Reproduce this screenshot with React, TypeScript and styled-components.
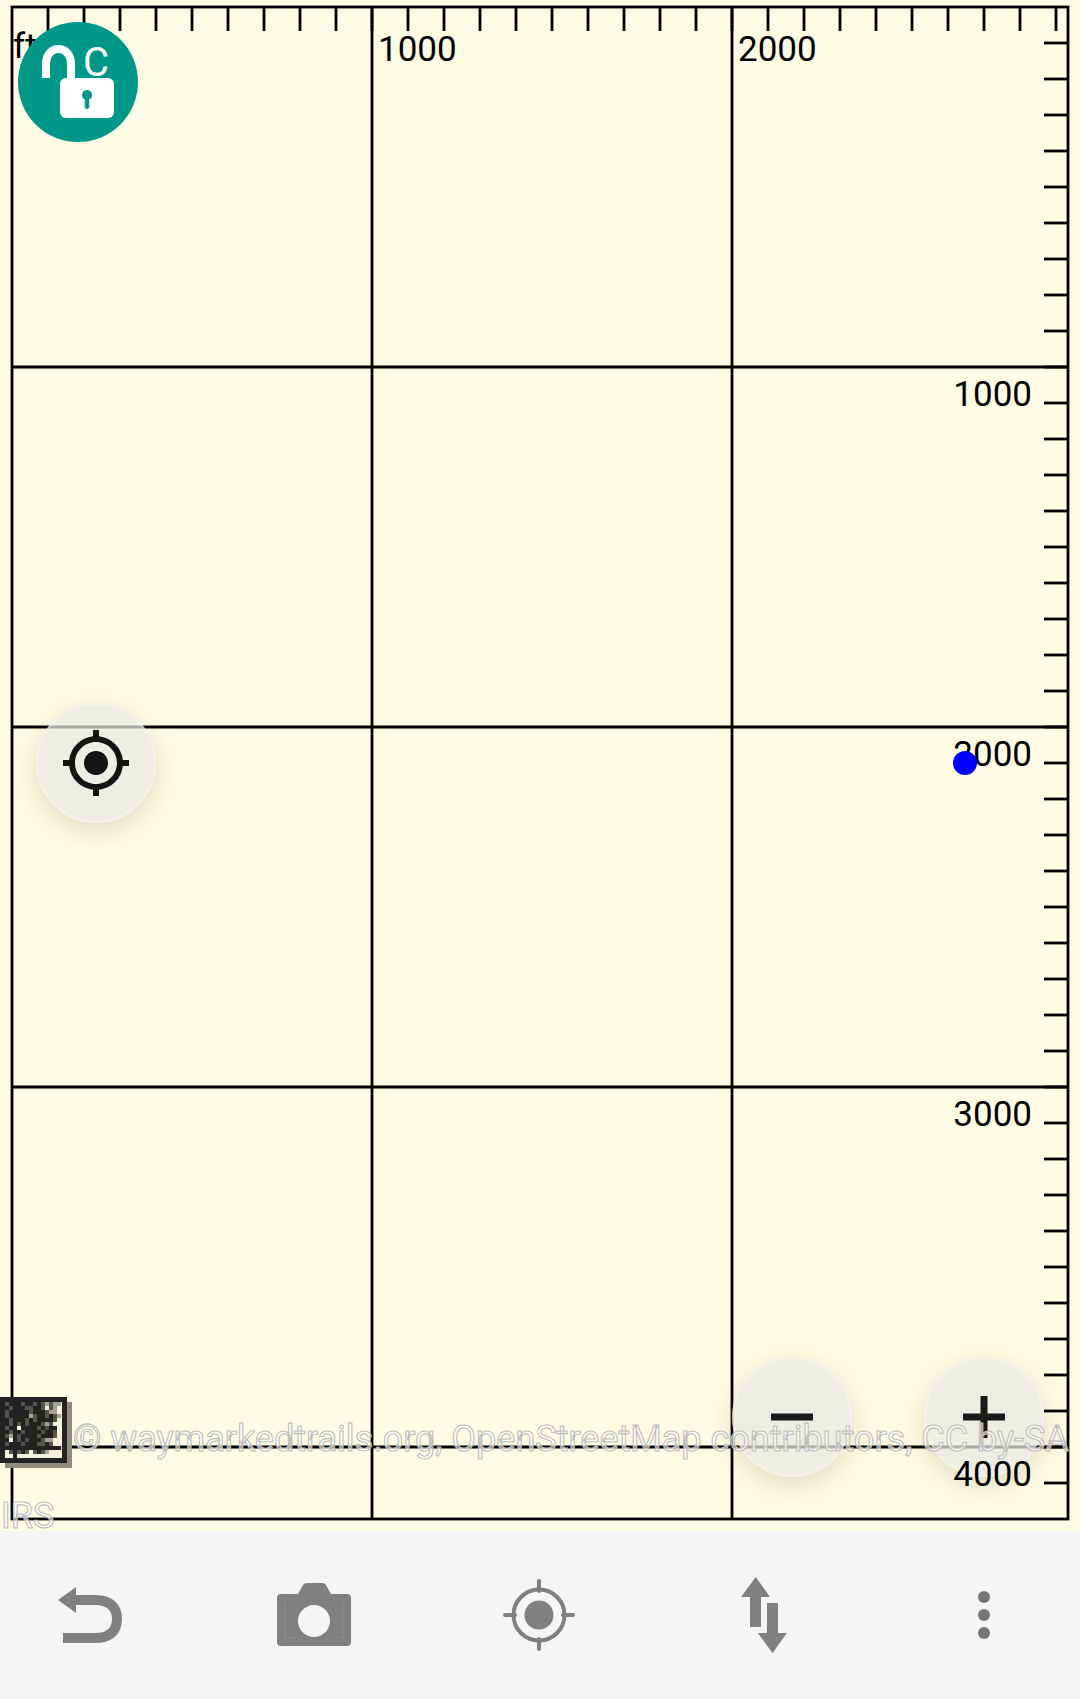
import React from 'react'
import styled, { createGlobalStyle } from 'styled-components'

const GlobalStyle = createGlobalStyle`
    html, body {
        margin: 0;
        padding: 0;
        background: #f5f5f5;
    }
    body {
        font-family: Roboto, "Liberation Sans", sans-serif;
    }
`

const Screen = styled.div`
    width: 1080px;
    height: 1699px;
    display: flex;
    flex-direction: column;
    overflow: hidden;
`

const MapArea = styled.div`
    position: relative;
    flex: 0 0 1531px;
    background: #fdfbe3;
    overflow: hidden;
`

const Plot = styled.svg`
    display: block;
`

const TopAxis = styled.div`
    position: absolute;
    left: 12px;
    top: 32px;
    display: grid;
    grid-template-columns: repeat(3, 360px);
    color: #000;
    font-size: 35px;
    line-height: 35px;
`

const TopLabel = styled.span<{ $flush?: boolean }>`
    padding-left: ${(props) => props.$flush ? '1px' : '6px'};
    margin-top: ${(props) => props.$flush ? '-3px' : '0'};
`

const RightAxis = styled.div`
    position: absolute;
    right: 48px;
    top: 377px;
    display: flex;
    flex-direction: column;
    gap: 325px;
    color: #000;
    font-size: 35px;
    line-height: 35px;
    text-align: right;
`

const RoundButton = styled.button<{ $x: number; $y: number }>`
    position: absolute;
    left: ${(props) => props.$x - 60}px;
    top: ${(props) => props.$y - 60}px;
    width: 120px;
    height: 120px;
    padding: 0;
    border: none;
    border-radius: 50%;
    display: flex;
    align-items: center;
    justify-content: center;
    background: radial-gradient(circle at 50% 55%, rgba(232, 232, 228, 0.72) 70%, rgba(242, 242, 238, 0.7) 100%);
    box-shadow: 0 8px 24px rgba(110, 110, 70, 0.22), inset 0 0 0 2px rgba(255, 255, 255, 0.3);
`

const LockButton = styled.div`
    position: absolute;
    left: 18px;
    top: 22px;
    width: 120px;
    height: 120px;
    border-radius: 50%;
    background: #009688;
`

const LockIcon = styled.svg`
    display: block;
`

const LockLetter = styled.text`
    fill: #fff;
    font-family: Roboto, sans-serif;
    font-size: 40px;
    font-weight: 400;
`

const Attribution = styled.span<{ $x: number; $y: number }>`
    position: absolute;
    left: ${(props) => props.$x}px;
    top: ${(props) => props.$y}px;
    font-size: 36px;
    line-height: 36px;
    white-space: nowrap;
    color: rgba(255, 255, 255, 0.6);
    -webkit-text-stroke: 1.1px #bdbdbd;
`

const Tile = styled.svg`
    position: absolute;
    left: 0;
    top: 1397px;
    filter: blur(0.5px);
`

const PositionDot = styled.div`
    position: absolute;
    left: 953px;
    top: 751px;
    width: 24px;
    height: 24px;
    border-radius: 50%;
    background: #0000ff;
`

const Toolbar = styled.div`
    flex: 1;
    display: flex;
    align-items: center;
    gap: 104px;
    padding-left: 30px;
    background: #f5f5f5;
`

const ToolIcon = styled.svg`
    display: block;
    flex: 0 0 120px;
`

const GPS_PATH = 'M12 8c-2.21 0-4 1.79-4 4s1.79 4 4 4 4-1.79 4-4-1.79-4-4-4zm8.94 3A8.994 8.994 0 0 0 13 3.06V1h-2v2.06A8.994 8.994 0 0 0 3.06 11H1v2h2.06A8.994 8.994 0 0 0 11 20.94V23h2v-2.06A8.994 8.994 0 0 0 20.94 13H23v-2h-2.06zM12 19c-3.87 0-7-3.13-7-7s3.13-7 7-7 7 3.13 7 7-3.13 7-7 7z'

const TICK_STEP = 36
const PLOT = { left: 12, top: 7, right: 1068, bottom: 1519 }

const range = (from: number, to: number, step: number) => {
    const out: number[] = []
    for (let v = from; v <= to; v += step) out.push(v)
    return out
}

const GridPlot = () => (
    <Plot width={1080} height={1531} stroke="#000" strokeWidth={2.8} fill="none">
        <rect x={PLOT.left} y={PLOT.top} width={PLOT.right - PLOT.left} height={PLOT.bottom - PLOT.top} />
        {[372, 732].map((x) => (
            <line key={x} x1={x} x2={x} y1={PLOT.top} y2={PLOT.bottom} />
        ))}
        {[367, 727, 1087, 1447].map((y) => (
            <line key={y} x1={PLOT.left} x2={PLOT.right} y1={y} y2={y} />
        ))}
        {range(PLOT.left + TICK_STEP, PLOT.right - 1, TICK_STEP).map((x) => (
            <line key={x} x1={x} x2={x} y1={PLOT.top} y2={PLOT.top + 24} />
        ))}
        {range(PLOT.top + TICK_STEP, PLOT.bottom - 1, TICK_STEP).map((y) => (
            <line key={y} x1={PLOT.right - 24} x2={PLOT.right} y1={y} y2={y} />
        ))}
    </Plot>
)

// # solid, + mid grey, - light grey, . empty
const TILE_ROWS = [
    '+###+##+#+-+--',
    '#+###++##+.+-.',
    '+#####+###+--.',
    '+#####-+##+#+-',
    '#+###+#+####+.',
    '#+#+#+###+-+..',
    '+##.####+#+##.',
    '#+##+####+##+.',
    '+-#+####+###+.',
    '#.#+#+###+--..',
    '+###+###++#+..',
    '##############',
    '.+#+#+.+#+-...',
    '..#...........',
]

const TILE_COLOURS: Record<string, string> = { '#': '#222', '+': '#55554e', '-': '#a5a494' }

const MosaicTile = () => (
    <Tile width={74} height={72}>
        <rect x={5} y={5} width={67} height={66} fill="#8e8e7e" />
        <rect x={0} y={0} width={67} height={66} fill="#f4f2dc" />
        {TILE_ROWS.map((row, r) =>
            row.split('').map((cell, c) =>
                cell === '.' ? null : (
                    <rect key={`${r}-${c}`} x={5 + c * 4} y={5 + r * 4} width={4} height={4} fill={TILE_COLOURS[cell]} />
                )
            )
        )}
        <rect x={2.5} y={2.5} width={62} height={61} fill="none" stroke="#222" strokeWidth={5} />
    </Tile>
)

const LockGlyph = () => (
    <LockIcon width={120} height={120} viewBox="18 22 120 120">
        <path d="M46 78 V64 C46 44 71 44 71 64 V80" fill="none" stroke="#fff" strokeWidth={8} />
        <rect x={60} y={78} width={54} height={40} rx={6} fill="#fff" />
        <circle cx={87} cy={95} r={5} fill="#009688" />
        <rect x={84.8} y={95} width={4.4} height={14} rx={2} fill="#009688" />
        <LockLetter x={83} y={76}>C</LockLetter>
    </LockIcon>
)

const App = () => {
    return (
        <Screen>
            <GlobalStyle />
            <MapArea>
                <GridPlot />
                <RoundButton $x={96} $y={763}>
                    <svg width={72} height={72} viewBox="0 0 24 24" fill="#141414"><path d={GPS_PATH} /></svg>
                </RoundButton>
                <RoundButton $x={792} $y={1417}>
                    <svg width={72} height={72} viewBox="0 0 72 72" fill="#1a1a1a"><path d="M15 32.5h42v7H15z" /></svg>
                </RoundButton>
                <RoundButton $x={984} $y={1417}>
                    <svg width={72} height={72} viewBox="0 0 72 72" fill="#1a1a1a"><path d="M15 32.5h17.5V15h7v17.5H57v7H39.5V57h-7V39.5H15z" /></svg>
                </RoundButton>
                <TopAxis>
                    <TopLabel $flush>ft</TopLabel>
                    <TopLabel>1000</TopLabel>
                    <TopLabel>2000</TopLabel>
                </TopAxis>
                <RightAxis>
                    <span>1000</span>
                    <span>2000</span>
                    <span>3000</span>
                    <span>4000</span>
                </RightAxis>
                <MosaicTile />
                <Attribution $x={73} $y={1421}>© waymarkedtrails.org, OpenStreetMap contributors, CC by-SA</Attribution>
                <Attribution $x={1} $y={1498}>IRS</Attribution>
                <LockButton><LockGlyph /></LockButton>
                <PositionDot />
            </MapArea>
            <Toolbar>
                <ToolIcon width={120} height={120} viewBox="0 0 120 120" fill="#808080">
                    <path d="M28 45 L46 32 V58 Z" />
                    <path d="M46 45 H65 C80 45 87 52 87 64 C87 76 80 83 65 83 H33" fill="none" stroke="#808080" strokeWidth={10} />
                </ToolIcon>
                <ToolIcon width={120} height={120} viewBox="0 0 120 120" fill="#808080">
                    <path fillRule="evenodd" d="M27 39 H44 L49 30 Q50 28 53 28 H68 Q71 28 72 30 L77 39 H93 Q97 39 97 43 V87 Q97 91 93 91 H27 Q23 91 23 87 V43 Q23 39 27 39 Z M60 50 A16 16 0 1 0 60 82 A16 16 0 1 0 60 50 Z" />
                    <path d="M31 83 V47 M89 83 V47 M31 83 H42 M89 83 H78" fill="none" stroke="#8c8c8c" strokeWidth={1} />
                </ToolIcon>
                <ToolIcon width={120} height={120} viewBox="0 0 120 120" fill="#808080">
                    <circle cx={61} cy={60} r={14.5} />
                    <circle cx={61} cy={60} r={25.5} fill="none" stroke="#808080" strokeWidth={4} />
                    <path d="M61 26 V36 M61 84 V94 M27 60 H37 M85 60 H95" fill="none" stroke="#808080" strokeWidth={4} strokeLinecap="round" />
                </ToolIcon>
                <ToolIcon width={120} height={120} viewBox="0 0 120 120" fill="#808080">
                    <path d="M53.7 22 L68 42 H59 V72 H48 V42 H39 Z" />
                    <path d="M65 48 H76 V78 H85 L70.5 98 L55.7 78 H65 Z" />
                </ToolIcon>
                <ToolIcon width={120} height={120} viewBox="0 0 120 120" fill="#757575">
                    <circle cx={58} cy={42} r={6} />
                    <circle cx={58} cy={60} r={6} />
                    <circle cx={58} cy={78} r={6} />
                </ToolIcon>
            </Toolbar>
        </Screen>
    )
}

export default App
